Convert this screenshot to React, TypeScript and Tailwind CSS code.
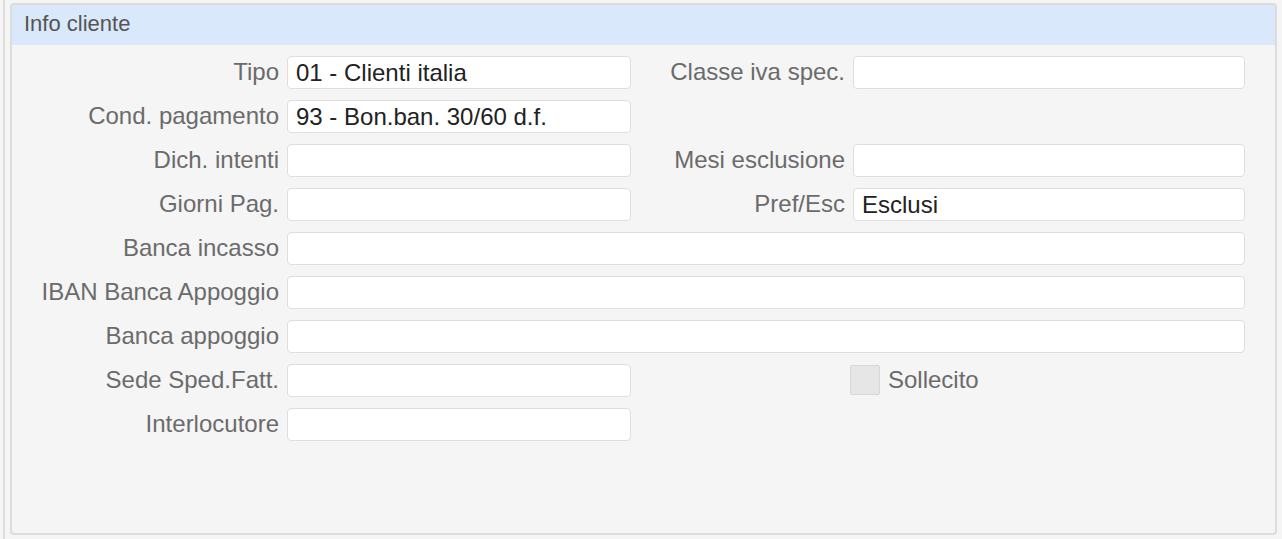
import React from "react"

type Field = { label: string; value?: string }

function Label({ text }: { text: string }) {
  return (
    <div className="flex h-[32px] items-center justify-end whitespace-nowrap pr-[8px] text-[#6b6b6b]">
      {text}
    </div>
  )
}

function Input({ value = "", wide = false }: { value?: string; wide?: boolean }) {
  return (
    <div
      className={
        "flex h-[33px] items-center rounded-[4px] border border-[#dedede] bg-white px-[8px] text-[#222] " +
        (wide ? "col-span-3" : "")
      }
    >
      {value}
    </div>
  )
}

const leftRight: [Field, Field | null][] = [
  [{ label: "Tipo", value: "01 - Clienti italia" }, { label: "Classe iva spec." }],
  [{ label: "Cond. pagamento", value: "93 - Bon.ban. 30/60 d.f." }, null],
  [{ label: "Dich. intenti" }, { label: "Mesi esclusione" }],
  [{ label: "Giorni Pag." }, { label: "Pref/Esc", value: "Esclusi" }],
]

const wideRows = ["Banca incasso", "IBAN Banca Appoggio", "Banca appoggio"]

export default function App() {
  return (
    <div
      className="flex h-[539px] w-[1282px] bg-[#f5f5f5] pl-[3px] text-[24px]"
      style={{ fontFamily: '"Liberation Sans", Arial, sans-serif' }}
    >
      <div className="flex flex-1 border-l-2 border-[#dcdcdc] pb-[4px] pl-[5px] pr-[5px] pt-[3px]">
        <div className="flex flex-1 flex-col overflow-hidden rounded-[4px] border-2 border-[#dcdcdc] bg-[#f5f5f5]">
          <div className="flex h-[40px] items-center bg-[#d9e8fa] px-[12px] pb-[3px] text-[22px] text-[#555]">
            Info cliente
          </div>
          <div className="grid grid-cols-[275px_344px_222px_392px] gap-y-[11px] pt-[11px]">
            {leftRight.map(([l, r], i) => (
              <React.Fragment key={i}>
                <Label text={l.label} />
                <Input value={l.value} />
                {r ? (
                  <>
                    <Label text={r.label} />
                    <Input value={r.value} />
                  </>
                ) : (
                  <>
                    <div />
                    <div />
                  </>
                )}
              </React.Fragment>
            ))}
            {wideRows.map((t) => (
              <React.Fragment key={t}>
                <Label text={t} />
                <Input wide />
              </React.Fragment>
            ))}
            <Label text="Sede Sped.Fatt." />
            <Input />
            <div />
            <div className="-ml-[3px] flex h-[32px] items-center gap-[8px] text-[#6b6b6b]">
              <div className="h-[30px] w-[30px] rounded-[2px] border border-[#d6d6d6] bg-[#e6e6e6]" />
              Sollecito
            </div>
            <Label text="Interlocutore" />
            <Input />
          </div>
        </div>
      </div>
    </div>
  )
}
